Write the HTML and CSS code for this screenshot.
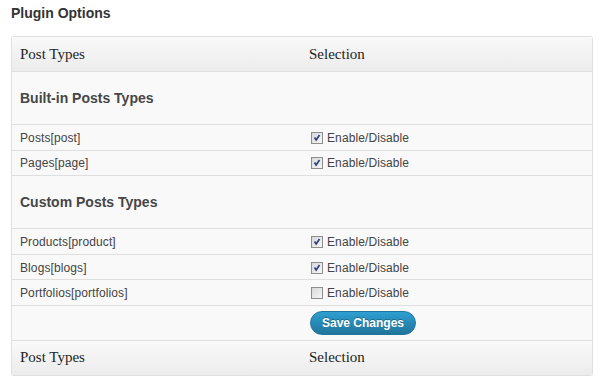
FILE: index.html
```html
<!DOCTYPE html>
<html lang="en">
<head>
    <meta charset="UTF-8">
    <meta name="viewport" content="width=device-width, initial-scale=1.0">
    <title>Plugin Options</title>
    <link rel="stylesheet" href="styles.css">
</head>
<body>
    <div class="wrap">
        <h2 class="page-title">Plugin Options</h2>

        <table class="widefat">
            <thead>
                <tr>
                    <th class="col-type">Post Types</th>
                    <th>Selection</th>
                </tr>
            </thead>
            <tbody>
                <tr class="section">
                    <td colspan="2">Built-in Posts Types</td>
                </tr>
                <tr>
                    <td>Posts[post]</td>
                    <td><label class="check"><span class="box on"><svg viewBox="0 0 12 12"><path d="M3 5.5 L5 8.5 L9 2.5" /></svg></span>Enable/Disable</label></td>
                </tr>
                <tr>
                    <td>Pages[page]</td>
                    <td><label class="check"><span class="box on"><svg viewBox="0 0 12 12"><path d="M3 5.5 L5 8.5 L9 2.5" /></svg></span>Enable/Disable</label></td>
                </tr>
                <tr class="section">
                    <td colspan="2">Custom Posts Types</td>
                </tr>
                <tr>
                    <td>Products[product]</td>
                    <td><label class="check"><span class="box on"><svg viewBox="0 0 12 12"><path d="M3 5.5 L5 8.5 L9 2.5" /></svg></span>Enable/Disable</label></td>
                </tr>
                <tr>
                    <td>Blogs[blogs]</td>
                    <td><label class="check"><span class="box on"><svg viewBox="0 0 12 12"><path d="M3 5.5 L5 8.5 L9 2.5" /></svg></span>Enable/Disable</label></td>
                </tr>
                <tr>
                    <td>Portfolios[portfolios]</td>
                    <td><label class="check"><span class="box"></span>Enable/Disable</label></td>
                </tr>
                <tr class="actions">
                    <td></td>
                    <td><button class="button-primary">Save Changes</button></td>
                </tr>
            </tbody>
            <tfoot>
                <tr>
                    <th class="col-type">Post Types</th>
                    <th>Selection</th>
                </tr>
            </tfoot>
        </table>
    </div>
</body>
</html>
```

FILE: styles.css
```css
body {
    margin: 0;
    background: #fff;
    font-family: "Liberation Sans", Arial, sans-serif;
    font-size: 12px;
    color: #333;
}

.wrap {
    padding: 0 7px 0 11px;
}

.page-title {
    margin: 0;
    padding-top: 5px;
    height: 31px;
    font-size: 14px;
    line-height: 17px;
    font-weight: bold;
    color: #333;
}

.widefat {
    width: 582px;
    border-collapse: separate;
    border-spacing: 0;
    border: 1px solid #dfdfdf;
    border-radius: 3px;
    background: #f9f9f9;
    box-shadow: 0 1px 1px rgba(0, 0, 0, 0.04);
}

.widefat th {
    height: 34px;
    padding: 0 8px;
    text-align: left;
    font-family: "Liberation Serif", "Times New Roman", serif;
    font-size: 15px;
    font-weight: normal;
    color: #1e1e1e;
    background: linear-gradient(to bottom, #f9f9f9, #ececec);
}

.widefat thead th {
    border-bottom: 1px solid #dfdfdf;
}

.widefat .col-type {
    width: 273px;
}

.widefat td {
    height: 23.6px;
    padding: 1px 8px 0;
    border-bottom: 1px solid #dfdfdf;
    vertical-align: middle;
    color: #444;
    letter-spacing: 0.1px;
}

.widefat .section td {
    height: 52px;
    padding: 0 8px;
    font-size: 14px;
    font-weight: bold;
    color: #464646;
    letter-spacing: 0;
}

.widefat .actions td {
    height: 34px;
    padding: 0 8px;
}

.check {
    display: flex;
    align-items: center;
    gap: 4px;
}

.box {
    width: 10px;
    height: 10px;
    margin-left: 2px;
    border: 1px solid #8e8e8e;
    background: linear-gradient(135deg, #d8d8d8, #f6f6f6);
    box-sizing: content-box;
    display: flex;
}

.box svg {
    width: 10px;
    height: 10px;
}

.box path {
    fill: none;
    stroke: #2e3f86;
    stroke-width: 2;
}

.button-primary {
    display: block;
    margin-left: 1px;
    height: 24px;
    padding: 0 11px;
    border: 1px solid #21759b;
    border-radius: 12px;
    background: linear-gradient(to bottom, #2e9fd2, #21759b);
    color: #fff;
    font-family: "Liberation Sans", Arial, sans-serif;
    font-size: 12px;
    font-weight: bold;
    letter-spacing: 0;
    text-shadow: 0 -1px 0 rgba(0, 0, 0, 0.3);
    cursor: pointer;
}
```
